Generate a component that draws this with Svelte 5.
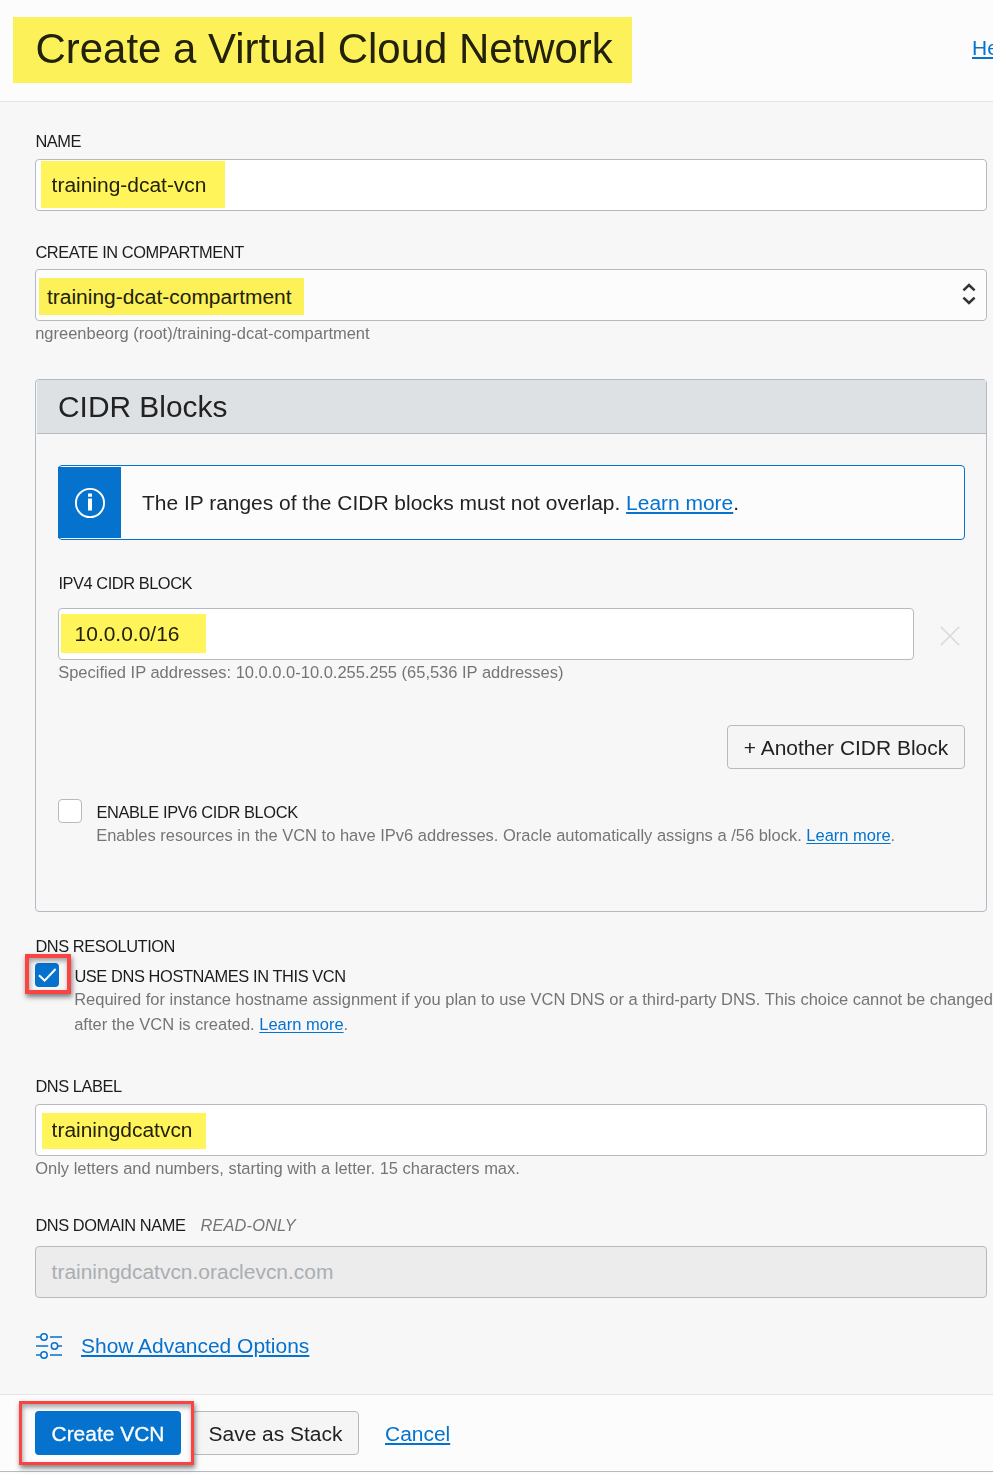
<script>
  let name = $state('training-dcat-vcn');
  let cidr = $state('10.0.0.0/16');
  let dnsLabel = $state('trainingdcatvcn');
  let ipv6 = $state(false);
  let dnsHostnames = $state(true);
</script>

<div class="page">
  <header>
    <h1>Create a Virtual Cloud Network</h1>
    <a href="#help" class="help">Help</a>
    <i class="mark mark-title"></i>
  </header>

  <main>
    <section class="field name">
      <label for="name" class="caption">NAME</label>
      <div class="control">
        <input id="name" bind:value={name} />
        <i class="mark mark-name"></i>
      </div>
    </section>

    <section class="field compartment">
      <div class="caption">CREATE IN COMPARTMENT</div>
      <div class="control select">
        <span>training-dcat-compartment</span>
        <svg width="14" height="24" viewBox="0 0 14 24" fill="none" stroke="#333" stroke-width="2.6">
          <path d="M1.4 8.4 7 3l5.6 5.4M1.4 15.6 7 21l5.6-5.4" />
        </svg>
        <i class="mark mark-compartment"></i>
      </div>
      <p class="hint path">ngreenbeorg (root)/training-dcat-compartment</p>
    </section>

    <section class="panel">
      <h2>CIDR Blocks</h2>
      <div class="panel-body">
        <div class="notice">
          <div class="notice-icon">
            <svg width="32" height="32" viewBox="0 0 32 32">
              <circle cx="16" cy="16" r="14.1" fill="none" stroke="#fff" stroke-width="1.9" />
              <path d="M14 6.6h4v3.2h-4zM14 11.4h4v12.2h-4z" fill="#fff" />
            </svg>
          </div>
          <p>The IP ranges of the CIDR blocks must not overlap. <a href="#overlap">Learn more</a>.</p>
        </div>

        <label for="cidr" class="caption ipv4">IPV4 CIDR BLOCK</label>
        <div class="cidr-row">
          <div class="control">
            <input id="cidr" bind:value={cidr} />
            <i class="mark mark-cidr"></i>
          </div>
          <svg width="20" height="20" viewBox="0 0 20 20" stroke="#dcdcdc" stroke-width="1.6">
            <path d="M.9.9 19.1 19.1M19.1.9.9 19.1" />
          </svg>
        </div>
        <p class="hint spec">Specified IP addresses: 10.0.0.0-10.0.255.255 (65,536 IP addresses)</p>

        <div class="actions"><button class="btn another">+ Another CIDR Block</button></div>

        <div class="check-row">
          <button class="box" class:on={ipv6} aria-label="Enable IPv6" onclick={() => (ipv6 = !ipv6)}></button>
          <div>
            <div class="caption en6">ENABLE IPV6 CIDR BLOCK</div>
            <p class="hint en6-hint">Enables resources in the VCN to have IPv6 addresses. Oracle automatically assigns a /56 block. <a href="#ipv6">Learn more</a>.</p>
          </div>
        </div>
      </div>
    </section>

    <section class="dns">
      <div class="caption res">DNS RESOLUTION</div>
      <div class="check-row">
        <div class="box-wrap">
          <button class="box" class:on={dnsHostnames} aria-label="Use DNS hostnames" onclick={() => (dnsHostnames = !dnsHostnames)}>
            {#if dnsHostnames}
              <svg width="24" height="24" viewBox="0 0 24 24" fill="none" stroke="#fff" stroke-width="2">
                <path d="M4 12.3 9.6 17.6 20.6 6" />
              </svg>
            {/if}
          </button>
          <i class="frame frame-check"></i>
        </div>
        <div>
          <div class="caption use">USE DNS HOSTNAMES IN THIS VCN</div>
          <p class="hint use-hint"><span>Required for instance hostname assignment if you plan to use VCN DNS or a third-party DNS. This choice cannot be changed</span><br /><span>after the VCN is created. <a href="#dns">Learn more</a>.</span></p>
        </div>
      </div>
    </section>

    <section class="field label">
      <label for="dns" class="caption">DNS LABEL</label>
      <div class="control">
        <input id="dns" bind:value={dnsLabel} />
        <i class="mark mark-dns"></i>
      </div>
      <p class="hint only">Only letters and numbers, starting with a letter. 15 characters max.</p>
    </section>

    <section class="field domain">
      <div class="caption"><span>DNS DOMAIN NAME</span><em>READ-ONLY</em></div>
      <div class="control readonly"><span>{dnsLabel}.oraclevcn.com</span></div>
    </section>

    <div class="advanced">
      <svg width="26" height="28" viewBox="0 0 26 28" fill="none" stroke="#0572ce" stroke-width="1.5">
        <circle cx="8" cy="5" r="3.2" />
        <circle cx="18.5" cy="14" r="3.2" />
        <circle cx="8" cy="23" r="3.2" />
        <path d="M0 5h4.8M14 5h12M0 14h12.2M21.7 14H26M0 23h4.8M14 23h12" />
      </svg>
      <a href="#advanced">Show Advanced Options</a>
    </div>
  </main>

  <footer>
    <button class="btn primary">Create VCN</button>
    <button class="btn save">Save as Stack</button>
    <a href="#cancel">Cancel</a>
    <i class="frame frame-create"></i>
  </footer>
</div>

<style>
  :global(body) { overflow: hidden; background: #fcfcfc; }
  .page, .page * { box-sizing: border-box; }
  .page {
    width: 993px;
    height: 1474px;
    overflow: hidden;
    display: flex;
    flex-direction: column;
    font-family: 'Liberation Sans', Arial, sans-serif;
    font-size: 20.96px;
    line-height: 24px;
    color: #222;
    background: #fcfcfc;
    white-space: nowrap;
  }
  h1, h2, p { margin: 0; font-weight: 400; }
  a { color: #0572ce; text-decoration: underline; text-decoration-thickness: 2px; text-underline-offset: 2px; }

  header {
    position: relative;
    height: 102px;
    flex: none;
    display: flex;
    justify-content: space-between;
    padding: 24px 0 0 35.5px;
    border-bottom: 1px solid #e5e5e5;
  }
  h1 { font-size: 41.95px; line-height: 50px; }
  .help { width: 21px; margin-top: 12px; }

  main { height: 1292px; flex: none; background: #f7f7f7; padding: 27px 6px 0 35px; }
  .caption { display: block; font-size: 16.4px; line-height: 24px; letter-spacing: -0.44px; color: #1c1c1c; padding-left: 0.4px; }
  .hint { font-size: 16.49px; line-height: 24px; color: #757575; padding-left: 0.2px; }
  .hint a { text-decoration-thickness: 1px; }

  .control {
    position: relative;
    height: 52px;
    border: 1px solid #b3bac2;
    border-radius: 4px;
    background: #fff;
    display: flex;
    align-items: center;
    padding: 0 15.6px;
  }
  input { width: 100%; border: 0; padding: 0; outline: 0; background: transparent; font: inherit; color: inherit; }
  .name .control { margin-top: 6px; }
  .compartment { margin-top: 29px; }
  .compartment .control { margin-top: 5px; }
  .select { justify-content: space-between; background: #fcfcfc; padding: 3px 10px 0 11px; }
  .select svg { margin-bottom: 6px; }

  .panel { margin-top: 34px; height: 533px; border: 1px solid #b3bac2; border-radius: 4px; }
  h2 { height: 54px; margin-left: 1px; padding-left: 21px; font-size: 29.9px; line-height: 53px; background: #dde1e4; border-bottom: 1px solid #b3bac2; }
  .panel-body { padding: 31px 21px 0 22px; }
  .notice { display: flex; align-items: center; height: 75px; padding: 1px 0; border: 1px solid #0572ce; border-radius: 4px; background: #fcfcfc; }
  .notice-icon { display: flex; align-items: center; justify-content: center; width: 63px; height: 71px; margin-left: -1px; padding-left: 1px; background: #0572ce; }
  .notice p { margin-left: 21px; }
  .ipv4 { margin-top: 31px; }
  .cidr-row { display: flex; align-items: center; gap: 26px; margin-top: 13px; }
  .cidr-row .control { width: 856px; }
  .cidr-row svg { margin-top: 4px; }
  .actions { display: flex; justify-content: flex-end; margin-top: 41px; }
  .btn { height: 44px; padding: 2px 0 0; border: 1px solid #b3bac2; border-radius: 4px; background: #f5f5f5; font: inherit; color: inherit; }
  .another { width: 238px; }
  .panel .check-row { margin-top: 30px; gap: 14px; }
  .check-row { display: flex; align-items: flex-start; }
  .box { width: 24px; height: 24px; flex: none; padding: 0; border: 1px solid #b3bac2; border-radius: 4px; background: #fff; }
  .box.on { border: 0; background: #0572ce; }
  .box svg { display: block; }
  .en6 { margin-top: 1px; letter-spacing: -0.37px; }
  .en6-hint { margin-top: -1px; }

  .dns { margin-top: 22px; }
  .dns .check-row { margin-top: 5px; gap: 15px; }
  .box-wrap { position: relative; width: 24px; height: 24px; }
  .use { margin-top: 1px; letter-spacing: -0.4px; }
  .use-hint { line-height: 25px; margin-top: -1px; }

  .label { margin-top: 37px; }
  .label .control { margin-top: 6px; }
  .domain { margin-top: 33px; }
  .domain .caption { display: flex; gap: 15px; }
  em { color: #757575; letter-spacing: 0.15px; }
  .domain .control { margin-top: 9px; background: #ececec; color: #aaaeb3; }
  .advanced { display: flex; align-items: center; gap: 19px; margin: 34px 0 0 1px; }

  footer { position: relative; display: flex; align-items: center; height: 78px; flex: none; padding-left: 35px; border-top: 1px solid #e5e5e5; border-bottom: 1px solid #b3bac2; }
  footer > a { margin-top: 2px; }
  .primary { width: 146px; border: 0; background: #0572ce; color: #fff; -webkit-text-stroke: 0.3px #fff; }
  .save { width: 167px; margin: 0 26px 0 11px; }

  .mark { position: absolute; background: #fff45a; mix-blend-mode: multiply; }
  .mark-title { left: 13px; top: 17px; width: 619px; height: 66px; }
  .mark-name { left: 5px; top: 1px; width: 184px; height: 47px; }
  .mark-compartment { left: 3px; top: 8px; width: 265px; height: 37px; }
  .mark-cidr { left: 2px; top: 5px; width: 145px; height: 39px; }
  .mark-dns { left: 6px; top: 8px; width: 164px; height: 36px; }
  .frame { position: absolute; border: 3px solid #fc4344; box-shadow: 1px 3px 5px rgba(0, 0, 0, .5), inset 1px 3px 5px rgba(0, 0, 0, .35); pointer-events: none; }
  .frame-check { left: -10px; top: -9px; width: 46px; height: 40px; border-width: 4px; }
  .frame-create { left: 19px; top: 6px; width: 175px; height: 64px; }
</style>
